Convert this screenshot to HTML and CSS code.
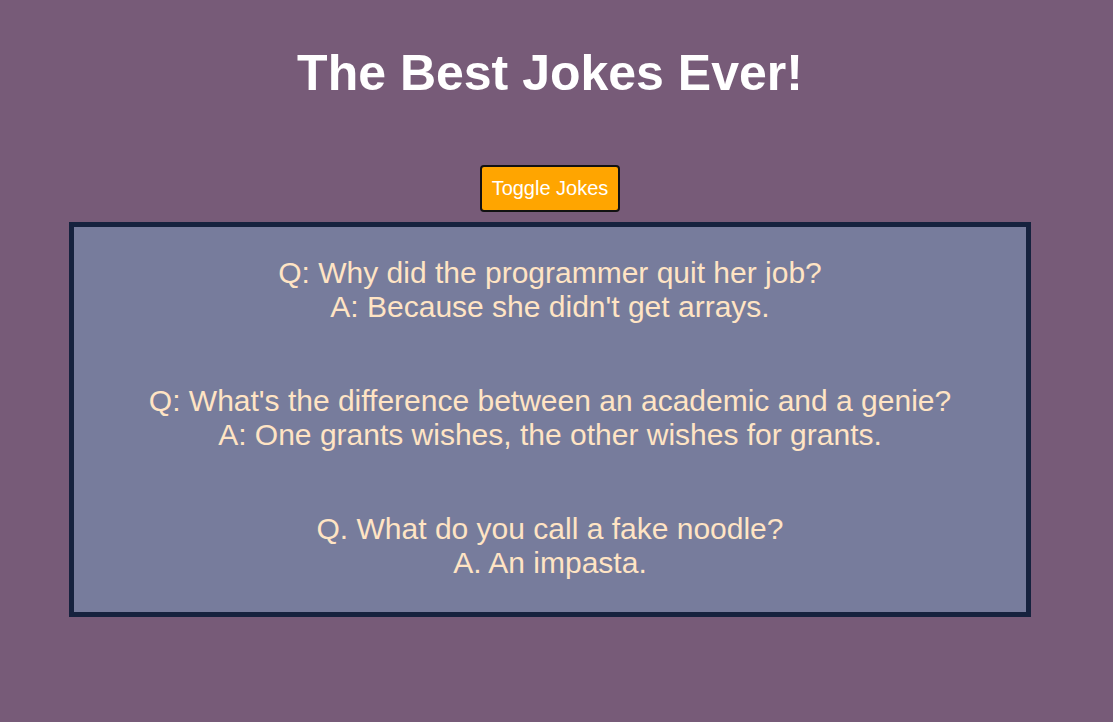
FILE: index.html
```html
<!DOCTYPE html>
<html lang="en">
<head>
<meta charset="utf-8">
<title>The Best Jokes Ever!</title>
<link rel="stylesheet" href="styles.css">
</head>
<body>
<div class="page">
  <h1 class="title">The Best Jokes Ever!</h1>
  <div class="actions">
    <button class="toggle" type="button">Toggle Jokes</button>
  </div>
  <div class="jokes">
    <p class="joke">Q: Why did the programmer quit her job?<br>A: Because she didn't get arrays.</p>
    <p class="joke">Q: What's the difference between an academic and a genie?<br>A: One grants wishes, the other wishes for grants.</p>
    <p class="joke">Q. What do you call a fake noodle?<br>A. An impasta.</p>
  </div>
</div>
</body>
</html>
```

FILE: styles.css
```css
html, body {
  margin: 0;
  padding: 0;
  background: #775b78;
  font-family: "Liberation Sans", Arial, sans-serif;
}

.page {
  width: 1084px;
  margin-left: 8px;
  display: flex;
  flex-direction: column;
  align-items: center;
}

.title {
  margin: 45px 0 0;
  font-size: 50px;
  line-height: 56px;
  font-weight: bold;
  color: #ffffff;
  text-align: center;
}

.actions {
  margin-top: 64px;
  display: flex;
  justify-content: center;
}

.toggle {
  width: 140px;
  height: 47px;
  background: #ffa500;
  color: #ffffff;
  border: 2px solid #111111;
  border-radius: 4px;
  font-family: "Liberation Sans", Arial, sans-serif;
  font-size: 20px;
  padding: 0;
}

.jokes {
  margin-top: 10px;
  width: 962px;
  box-sizing: border-box;
  background: #777c9c;
  border: 5px solid #16223e;
  padding: 29px 0 32px;
  display: flex;
  flex-direction: column;
  gap: 60px;
}

.joke {
  margin: 0;
  font-size: 30px;
  line-height: 34px;
  color: #ffe4c4;
  text-align: center;
}
```
